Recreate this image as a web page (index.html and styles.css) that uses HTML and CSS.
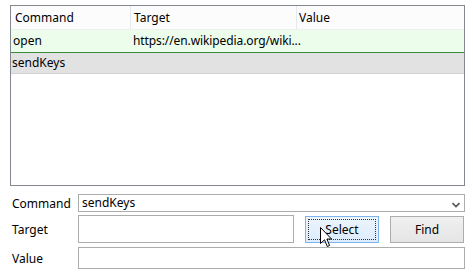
FILE: index.html
```html
<!doctype html>
<html lang="en">
<head>
  <meta charset="UTF-8">
  <title>Command Editor</title>
  <link rel="stylesheet" href="styles.css">
</head>
<body>
  <div class="editor">
    <div class="grid">
      <div class="row head">
        <div class="cell c1">Command</div>
        <div class="cell c2">Target</div>
        <div class="cell c3">Value</div>
      </div>
      <div class="row done">
        <div class="cell c1">open</div>
        <div class="cell c2">https://en.wikipedia.org/wiki...</div>
        <div class="cell c3"></div>
      </div>
      <div class="row current">
        <div class="cell c1">sendKeys</div>
        <div class="cell c2"></div>
        <div class="cell c3"></div>
      </div>
    </div>

    <div class="form">
      <div class="line cmd">
        <label>Command</label>
        <div class="combo">
          <span>sendKeys</span>
          <svg class="arrow" width="8" height="6" viewBox="0 0 8 6"><path d="M0.5 1 L4 4.5 L7.5 1" fill="none" stroke="#555" stroke-width="1.6"/></svg>
        </div>
      </div>
      <div class="line target">
        <label>Target</label>
        <div class="box short"></div>
        <button class="btn select" type="button"><span>Select</span></button>
        <button class="btn find" type="button">Find</button>
        <svg class="cursor" width="13" height="21" viewBox="0 0 13 21">
          <path d="M0.5 0.5 L0.5 16.5 L4.5 12.8 L7.3 19.5 L9.6 18.5 L6.9 12 L11.5 12 Z" fill="#fff" stroke="#000" stroke-width="1"/>
        </svg>
      </div>
      <div class="line value">
        <label>Value</label>
        <div class="box"></div>
      </div>
    </div>
  </div>
</body>
</html>
```

FILE: styles.css
```css
body {
  margin: 0;
  padding: 0;
  background: #ffffff;
  font-family: 'Noto Sans', sans-serif;
  font-size: 12px;
  color: #000000;
}

.editor {
  padding: 5px 8px 0 10px;
}

.grid {
  width: 453px;
  height: 179px;
  border: 1px solid #828790;
  background: #ffffff;
}

.row {
  display: flex;
}

.cell {
  box-sizing: border-box;
  white-space: nowrap;
  overflow: hidden;
}

.c3 { flex: 1; }

.head {
  height: 23px;
  line-height: 23px;
  background: #fcfcfd;
  border-bottom: 1px solid #eef0f3;
}

.head .cell {
  border-right: 1px solid #e5e8ec;
}

.head .c1 { width: 120px; padding-left: 4px; }
.head .c2 { width: 166px; padding-left: 3px; }
.head .c3 { padding-left: 2px; border-right: none; }

.done {
  height: 22px;
  line-height: 22px;
  background: #ecfdec;
  border-bottom: 1px solid #3b8a3b;
}

.done .c1 { width: 122px; padding-left: 2px; }
.done .c2 { width: 180px; overflow: visible; letter-spacing: -0.1px; }

.current {
  height: 20px;
  line-height: 20px;
  background: #e2e2e2;
  border-bottom: 1px solid #d2d2d2;
}

.current .c1 { width: 122px; padding-left: 1px; }

.form {
  margin-top: 8px;
  padding-left: 2px;
}

.line {
  display: flex;
  align-items: center;
  position: relative;
}

.line label {
  width: 66px;
}

.cmd {
  height: 18px;
}

.combo {
  border: 1px solid #acacac;
  display: flex;
  align-items: center;
  justify-content: space-between;
  padding: 0 4px 0 3px;
  box-sizing: border-box;
  width: 387px;
  height: 18px;
  line-height: 16px;
}

.combo .arrow {
  margin-top: 3px;
}

.target {
  margin-top: 3px;
  height: 28px;
}

.box {
  border: 1px solid #acacac;
  box-sizing: border-box;
  width: 387px;
  height: 22px;
}

.box.short {
  width: 216px;
  height: 28px;
}

.btn {
  font-family: 'Noto Sans', sans-serif;
  font-size: 12px;
  height: 27px;
  width: 74px;
  padding: 0;
  box-sizing: border-box;
  color: #000;
}

.select {
  margin-left: 11px;
  border: 1px solid #7eb4ea;
  background: linear-gradient(#ecf4fc, #dcecfc);
  padding: 2px;
}

.select span {
  display: block;
  height: 100%;
  line-height: 19px;
  border: 1px dotted #333;
  box-sizing: border-box;
}

.find {
  margin-left: 11px;
  border: 1px solid #adadad;
  background: linear-gradient(#f0f0f0, #e5e5e5);
}

.cursor {
  position: absolute;
  left: 308px;
  top: 12px;
}

.value {
  margin-top: 4px;
  height: 22px;
}
```
